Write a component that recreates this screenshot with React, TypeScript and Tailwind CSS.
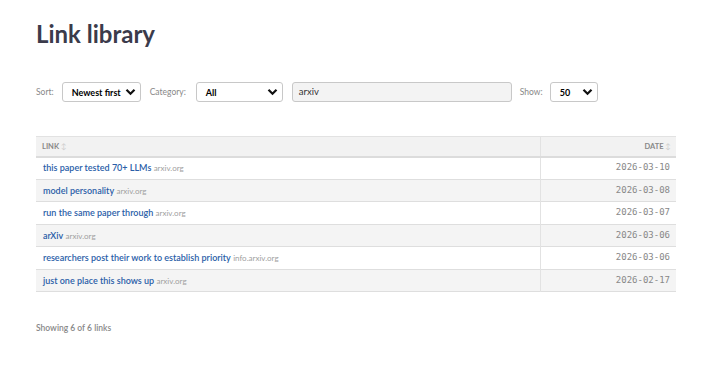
import React from 'react';

const links = [
  { title: 'this paper tested 70+ LLMs', domain: 'arxiv.org', date: '2026-03-10' },
  { title: 'model personality', domain: 'arxiv.org', date: '2026-03-08' },
  { title: 'run the same paper through', domain: 'arxiv.org', date: '2026-03-07' },
  { title: 'arXiv', domain: 'arxiv.org', date: '2026-03-06' },
  { title: 'researchers post their work to establish priority', domain: 'info.arxiv.org', date: '2026-03-06' },
  { title: 'just one place this shows up', domain: 'arxiv.org', date: '2026-02-17' },
];

function Chevron() {
  return (
    <svg width="11" height="8" viewBox="0 0 11 8" className="shrink-0">
      <path d="M1.5 1.8 L5.5 5.8 L9.5 1.8" fill="none" stroke="#111" strokeWidth="2.2" />
    </svg>
  );
}

function Select({ value, className }: { value: string; className: string }) {
  return (
    <div
      className={`flex h-[20px] items-center justify-between whitespace-nowrap rounded-[3px] border border-[#c8c8c8] bg-white pl-[9px] pr-[4px] text-[9px] font-bold leading-none text-black ${className}`}
    >
      <span>{value}</span>
      <Chevron />
    </div>
  );
}

function Label({ children, className }: { children: React.ReactNode; className: string }) {
  return <span className={`block text-[8.5px] leading-none text-[#888] ${className}`}>{children}</span>;
}

export default function App() {
  return (
    <main className="min-h-screen bg-white px-[36px] pt-[19px] font-['Lato',sans-serif] text-[#333]">
      <h1 className="text-[24px] font-bold leading-[30px] text-[#3b3b4b]">Link library</h1>

      <div className="mt-[33px] flex items-center leading-none">
        <Label className="">Sort:</Label>
        <Select value="Newest first" className="ml-[8px] w-[79px]" />
        <Label className="ml-[9px]">Category:</Label>
        <Select value="All" className="ml-[10px] w-[87px]" />
        <div className="ml-[9px] flex h-[20px] w-[220px] items-center rounded-[3px] border border-[#c8c8c8] bg-[#f3f3f3] pl-[6px] text-[9.5px] text-[#333]">
          arxiv
        </div>
        <Label className="ml-[8px]">Show:</Label>
        <Select value="50" className="ml-[7px] w-[48px]" />
      </div>

      <table className="mt-[34px] w-[640px] border-collapse text-[9px]">
        <thead>
          <tr className="h-[20px] border-b-2 border-[#dcdcdc] bg-[#f2f2f2] text-[7.5px] font-bold text-[#888]">
            <th className="border-t border-[#e2e2e2] pl-[6px] text-left">
              LINK <span className="font-normal text-[#ccc]">↕</span>
            </th>
            <th className="w-[136px] border-l border-t border-[#e2e2e2] pr-[5px] text-right">
              DATE <span className="font-normal text-[#ccc]">↕</span>
            </th>
          </tr>
        </thead>
        <tbody>
          {links.map((l, i) => (
            <tr key={i} className={`h-[22.5px] border-b border-[#dedede] ${i % 2 === 1 ? 'bg-[#f4f4f4]' : 'bg-white'}`}>
              <td className="pl-[7px]">
                <span className="font-semibold text-[#2a5ea8]">{l.title}</span>{' '}
                <span className="text-[8px] text-[#a0a0a0]">{l.domain}</span>
              </td>
              <td className="border-l border-[#e2e2e2] pr-[6px] text-right font-['DejaVu_Sans_Mono',monospace] text-[9px] text-[#888]">
                {l.date}
              </td>
            </tr>
          ))}
        </tbody>
      </table>

      <p className="mt-[30px] text-[8.5px] font-semibold text-[#888]">Showing 6 of 6 links</p>
    </main>
  );
}
